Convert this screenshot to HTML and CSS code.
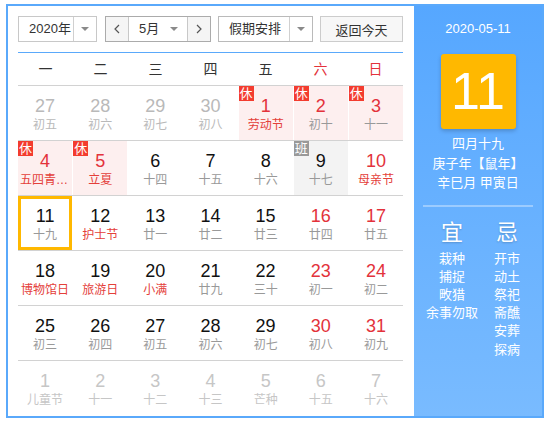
FILE: index.html
```html
<!DOCTYPE html>
<html lang="zh-CN">

<head>
    <meta charset="UTF-8">
    <meta name="viewport" content="width=device-width, initial-scale=1.0">
    <title>万年历</title>
    <link rel="stylesheet" href="styles.css">
</head>

<body>
    <div class="cal_box">
        <div class="cal_left">
            <div class="tools">
                <div class="sel year_sel">
                    <span class="sel_txt">2020年</span>
                    <span class="sel_arr"><i class="tri"></i></span>
                </div>
                <div class="sel month_grp">
                    <span class="mbtn">
                        <svg width="6" height="10" viewBox="0 0 6 10"><polyline points="5,1 1,5 5,9" fill="none" stroke="#555" stroke-width="1.2"/></svg>
                    </span>
                    <span class="month_txt">5月<i class="tri"></i></span>
                    <span class="mbtn">
                        <svg width="6" height="10" viewBox="0 0 6 10"><polyline points="1,1 5,5 1,9" fill="none" stroke="#555" stroke-width="1.2"/></svg>
                    </span>
                </div>
                <div class="sel hol_sel">
                    <span class="sel_txt">假期安排</span>
                    <span class="sel_arr"><i class="tri"></i></span>
                </div>
                <button class="back_btn">返回今天</button>
            </div>

            <div class="week_head">
                <span>一</span><span>二</span><span>三</span><span>四</span><span>五</span>
                <span class="red">六</span><span class="red">日</span>
            </div>

            <div class="week">
                <div class="day other"><div class="num">27</div><div class="lun">初五</div></div>
                <div class="day other"><div class="num">28</div><div class="lun">初六</div></div>
                <div class="day other"><div class="num">29</div><div class="lun">初七</div></div>
                <div class="day other"><div class="num">30</div><div class="lun">初八</div></div>
                <div class="day rest"><i class="tag">休</i><div class="num red">1</div><div class="lun fest">劳动节</div></div>
                <div class="day rest"><i class="tag">休</i><div class="num red">2</div><div class="lun">初十</div></div>
                <div class="day rest"><i class="tag">休</i><div class="num red">3</div><div class="lun">十一</div></div>
            </div>
            <div class="week">
                <div class="day rest"><i class="tag">休</i><div class="num red">4</div><div class="lun fest">五四青年节</div></div>
                <div class="day rest"><i class="tag">休</i><div class="num red">5</div><div class="lun fest">立夏</div></div>
                <div class="day"><div class="num">6</div><div class="lun">十四</div></div>
                <div class="day"><div class="num">7</div><div class="lun">十五</div></div>
                <div class="day"><div class="num">8</div><div class="lun">十六</div></div>
                <div class="day work"><i class="tag ban">班</i><div class="num">9</div><div class="lun">十七</div></div>
                <div class="day"><div class="num red">10</div><div class="lun fest">母亲节</div></div>
            </div>
            <div class="week">
                <div class="day today"><div class="num">11</div><div class="lun">十九</div></div>
                <div class="day"><div class="num">12</div><div class="lun fest">护士节</div></div>
                <div class="day"><div class="num">13</div><div class="lun">廿一</div></div>
                <div class="day"><div class="num">14</div><div class="lun">廿二</div></div>
                <div class="day"><div class="num">15</div><div class="lun">廿三</div></div>
                <div class="day"><div class="num red">16</div><div class="lun">廿四</div></div>
                <div class="day"><div class="num red">17</div><div class="lun">廿五</div></div>
            </div>
            <div class="week">
                <div class="day"><div class="num">18</div><div class="lun fest">博物馆日</div></div>
                <div class="day"><div class="num">19</div><div class="lun fest">旅游日</div></div>
                <div class="day"><div class="num">20</div><div class="lun fest">小满</div></div>
                <div class="day"><div class="num">21</div><div class="lun">廿九</div></div>
                <div class="day"><div class="num">22</div><div class="lun">三十</div></div>
                <div class="day"><div class="num red">23</div><div class="lun">初一</div></div>
                <div class="day"><div class="num red">24</div><div class="lun">初二</div></div>
            </div>
            <div class="week">
                <div class="day"><div class="num">25</div><div class="lun">初三</div></div>
                <div class="day"><div class="num">26</div><div class="lun">初四</div></div>
                <div class="day"><div class="num">27</div><div class="lun">初五</div></div>
                <div class="day"><div class="num">28</div><div class="lun">初六</div></div>
                <div class="day"><div class="num">29</div><div class="lun">初七</div></div>
                <div class="day"><div class="num red">30</div><div class="lun">初八</div></div>
                <div class="day"><div class="num red">31</div><div class="lun">初九</div></div>
            </div>
            <div class="week last">
                <div class="day next"><div class="num">1</div><div class="lun">儿童节</div></div>
                <div class="day next"><div class="num">2</div><div class="lun">十一</div></div>
                <div class="day next"><div class="num">3</div><div class="lun">十二</div></div>
                <div class="day next"><div class="num">4</div><div class="lun">十三</div></div>
                <div class="day next"><div class="num">5</div><div class="lun">芒种</div></div>
                <div class="day next"><div class="num">6</div><div class="lun">十五</div></div>
                <div class="day next"><div class="num">7</div><div class="lun">十六</div></div>
            </div>
        </div>

        <div class="cal_right">
            <div class="cur_date">2020-05-11</div>
            <div class="big_day">11</div>
            <div class="lun_info">
                <div>四月十九</div>
                <div>庚子年【鼠年】</div>
                <div>辛巳月 甲寅日</div>
            </div>
            <div class="sep"></div>
            <div class="yiji">
                <div class="yj_col">
                    <div class="yj_t">宜</div>
                    <div>栽种</div>
                    <div>捕捉</div>
                    <div>畋猎</div>
                    <div>余事勿取</div>
                </div>
                <div class="yj_col">
                    <div class="yj_t">忌</div>
                    <div>开市</div>
                    <div>动土</div>
                    <div>祭祀</div>
                    <div>斋醮</div>
                    <div>安葬</div>
                    <div>探病</div>
                </div>
            </div>
        </div>
    </div>
</body>

</html>
```

FILE: styles.css
```css
body {
    margin: 0;
    background-color: #fff;
    font-family: "Liberation Sans", "Noto Sans CJK SC", sans-serif;
    color: #333;
}

.cal_box {
    display: flex;
    width: 538px;
    height: 414px;
    margin: 4px 0 0 6px;
    border: 2px solid #5aa9fb;
    box-sizing: border-box;
}

.cal_left {
    width: 406px;
    padding: 10px 11px 0 10px;
    box-sizing: border-box;
}

/* top tools */
.tools {
    display: flex;
    height: 26px;
    margin-bottom: 10px;
    font-size: 13px;
}

.sel {
    display: flex;
    height: 26px;
    box-sizing: border-box;
    border: 1px solid #c8c8c8;
    background-color: #fff;
    line-height: 24px;
}

.sel_txt {
    padding-left: 10px;
    box-sizing: border-box;
}

.sel_arr {
    display: flex;
    align-items: center;
    justify-content: center;
    width: 23px;
    border-left: 1px solid #d0d0d0;
    box-sizing: border-box;
}

.tri {
    display: inline-block;
    width: 0;
    height: 0;
    border-left: 4px solid transparent;
    border-right: 4px solid transparent;
    border-top: 4px solid #8a8a8a;
}

.year_sel {
    width: 79px;
    margin-right: 8px;
}

.year_sel .sel_txt {
    width: 54px;
}

.month_grp {
    width: 106px;
    border-color: #ababab;
}

.mbtn {
    display: flex;
    align-items: center;
    justify-content: center;
    width: 22px;
    background-color: #f5f5f5;
}

.month_txt {
    display: flex;
    align-items: center;
    justify-content: space-between;
    width: 60px;
    padding: 0 9px 0 10px;
    box-sizing: border-box;
    border-left: 1px solid #c8c8c8;
    border-right: 1px solid #c8c8c8;
}

.hol_sel {
    width: 95px;
    margin-left: 7px;
    border-color: #bababa;
}

.hol_sel .sel_txt {
    width: 70px;
}

.back_btn {
    margin-left: auto;
    width: 83px;
    height: 26px;
    padding: 0;
    border: 1px solid #cccccc;
    background-color: #f7f7f7;
    font-family: inherit;
    font-size: 13px;
    color: #333;
}

/* calendar grid */
.week_head {
    display: grid;
    grid-template-columns: repeat(7, 1fr);
    height: 34px;
    box-sizing: border-box;
    border-top: 1px solid #5aa9fb;
    border-bottom: 1px solid #d2d2d2;
    font-size: 14px;
    line-height: 32px;
    text-align: center;
    color: #333;
}

.week {
    display: grid;
    grid-template-columns: repeat(7, 1fr);
    column-gap: 1px;
    border-bottom: 1px solid #d2d2d2;
}

.week.last {
    border-bottom: none;
}

.day {
    position: relative;
    height: 54px;
    padding-top: 10px;
    box-sizing: border-box;
    text-align: center;
    overflow: hidden;
}

.num {
    font-size: 18px;
    line-height: 20px;
    color: #111;
}

.lun {
    padding: 0 2px;
    font-size: 12px;
    line-height: 18px;
    color: #999;
    white-space: nowrap;
    overflow: hidden;
    text-overflow: ellipsis;
}

.red {
    color: #e3323b !important;
}

.lun.fest {
    color: #e4403a;
}

.rest {
    background-color: #fdefef;
}

.work {
    background-color: #f3f3f3;
}

.today {
    box-shadow: inset 0 0 0 3px #ffb800;
}

.other .num,
.other .lun {
    color: #b9b9b9;
}

.next .num,
.next .lun {
    color: #c6c6c6;
}

.tag {
    position: absolute;
    left: 0;
    top: 0;
    width: 15px;
    height: 15px;
    background-color: #f33c2f;
    color: #fff;
    font-size: 13px;
    line-height: 15px;
    font-style: normal;
    text-align: center;
}

.tag.ban {
    background-color: #999;
}

/* right side */
.cal_right {
    flex: 1;
    padding-top: 13px;
    box-sizing: border-box;
    background: linear-gradient(#56a7ff, #79bbff);
    color: #fff;
    text-align: center;
}

.cur_date {
    font-size: 13px;
    line-height: 20px;
}

.big_day {
    width: 75px;
    height: 75px;
    margin: 15px auto 0;
    border-radius: 3px;
    background-color: #ffb800;
    box-shadow: 0 2px 4px rgba(0, 0, 0, 0.2);
    font-size: 52px;
    line-height: 75px;
}

.lun_info {
    margin-top: 5px;
    font-size: 13px;
    line-height: 19.5px;
}

.sep {
    width: 110px;
    height: 2px;
    margin: 12px auto 0;
    background-color: rgba(255, 255, 255, 0.35);
}

.yiji {
    display: flex;
    justify-content: center;
    padding-left: 3px;
    margin-top: 13px;
    font-size: 13px;
    line-height: 18.2px;
}

.yj_col {
    width: 55px;
}

.yj_t {
    margin-bottom: 4px;
    font-size: 22px;
    line-height: 26px;
    text-shadow: 0 1px 2px rgba(0, 0, 0, 0.2);
}
```
